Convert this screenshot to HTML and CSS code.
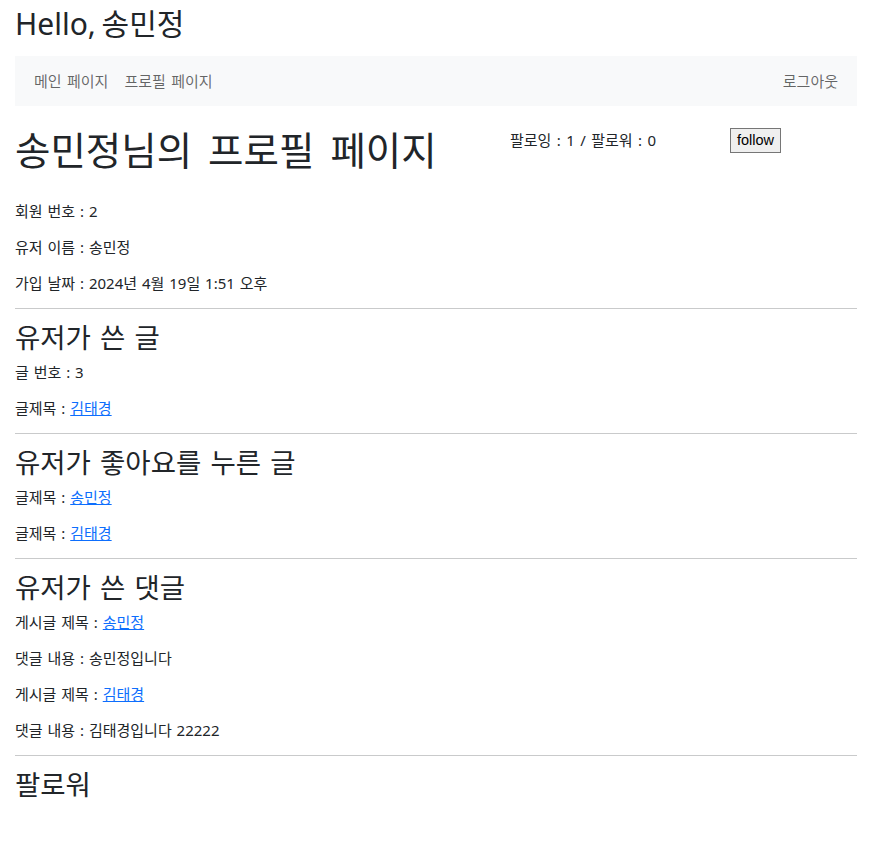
FILE: index.html
```html
<!DOCTYPE html>
<html lang="ko">
<head>
<meta charset="utf-8">
<title>프로필 페이지</title>
<link rel="stylesheet" href="styles.css">
</head>
<body>
<div class="page">
  <h2 class="hello">Hello, 송민정</h2>
  <nav class="navbar">
    <div class="nav-left">
      <a class="nav-link" href="#">메인 페이지</a>
      <a class="nav-link" href="#">프로필 페이지</a>
    </div>
    <a class="nav-link" href="#">로그아웃</a>
  </nav>

  <div class="profile-head">
    <h1 class="title">송민정님의 프로필 페이지</h1>
    <div class="follow-info">팔로잉 : 1 / 팔로워 : 0</div>
    <div class="follow-btn-wrap"><button class="follow-btn" type="button">follow</button></div>
  </div>

  <div class="list info">
    <p>회원 번호 : 2</p>
    <p>유저 이름 : 송민정</p>
    <p>가입 날짜 : 2024년 4월 19일 1:51 오후</p>
  </div>

  <section class="block">
    <hr class="divider">
    <h2 class="section-title">유저가 쓴 글</h2>
    <div class="list">
      <p>글 번호 : 3</p>
      <p>글제목 : <a href="#" class="link">김태경</a></p>
    </div>
  </section>

  <section class="block">
    <hr class="divider">
    <h2 class="section-title">유저가 좋아요를 누른 글</h2>
    <div class="list">
      <p>글제목 : <a href="#" class="link">송민정</a></p>
      <p>글제목 : <a href="#" class="link">김태경</a></p>
    </div>
  </section>

  <section class="block">
    <hr class="divider">
    <h2 class="section-title">유저가 쓴 댓글</h2>
    <div class="list">
      <p>게시글 제목 : <a href="#" class="link">송민정</a></p>
      <p>댓글 내용 : 송민정입니다</p>
      <p>게시글 제목 : <a href="#" class="link">김태경</a></p>
      <p>댓글 내용 : 김태경입니다 22222</p>
    </div>
  </section>

  <section class="block">
    <hr class="divider">
    <h2 class="section-title">팔로워</h2>
  </section>
</div>
</body>
</html>
```

FILE: styles.css
```css
* { box-sizing: border-box; }

html, body {
  margin: 0;
  padding: 0;
  background: #ffffff;
}

body {
  font-family: "Noto Sans", "Noto Sans CJK KR", sans-serif;
  font-size: 15px;
  word-spacing: 1px;
  color: #212529;
}

.page {
  display: flex;
  flex-direction: column;
  padding: 7px 29px 40px 15px;
}

.hello {
  margin: 0 0 15px;
  font-size: 30px;
  font-weight: 400;
  line-height: 34px;
  word-spacing: -2px;
}

.navbar {
  display: flex;
  align-items: center;
  justify-content: space-between;
  height: 50px;
  padding: 0 19px;
  background: #f8f9fa;
}

.nav-left {
  display: flex;
  gap: 16px;
}

.nav-link {
  font-size: 15px;
  line-height: 20px;
  word-spacing: 1.5px;
  color: rgba(0, 0, 0, 0.6);
  text-decoration: none;
}

.profile-head {
  display: grid;
  grid-template-columns: 495px 220px auto;
  align-items: start;
  margin-top: 20px;
}

.title {
  margin: 0;
  font-size: 38.5px;
  font-weight: 400;
  line-height: 48px;
  word-spacing: 6px;
}

.follow-info {
  padding-top: 4px;
  font-size: 15px;
  line-height: 20px;
  word-spacing: 1.5px;
}

.follow-btn-wrap {
  padding-top: 2px;
}

.follow-btn {
  font-family: "Liberation Sans", Arial, sans-serif;
  font-size: 14.5px;
  line-height: 17px;
  padding: 3px 6px;
  color: #000;
  background: #efefef;
  border: 1px solid #767676;
  border-radius: 0;
}

.list {
  display: flex;
  flex-direction: column;
  gap: 16px;
}

.list p {
  margin: 0;
  line-height: 20px;
}

.info {
  margin-top: 27px;
}

.block {
  display: flex;
  flex-direction: column;
}

.divider {
  margin: 15px 0 12px;
  border: 0;
  border-top: 1px solid #c9cacb;
  height: 0;
}

.section-title {
  margin: 0 0 7px;
  font-size: 27.5px;
  font-weight: 400;
  line-height: 34px;
  word-spacing: 2px;
}

.link {
  color: #0d6efd;
  text-decoration: underline;
}
```
